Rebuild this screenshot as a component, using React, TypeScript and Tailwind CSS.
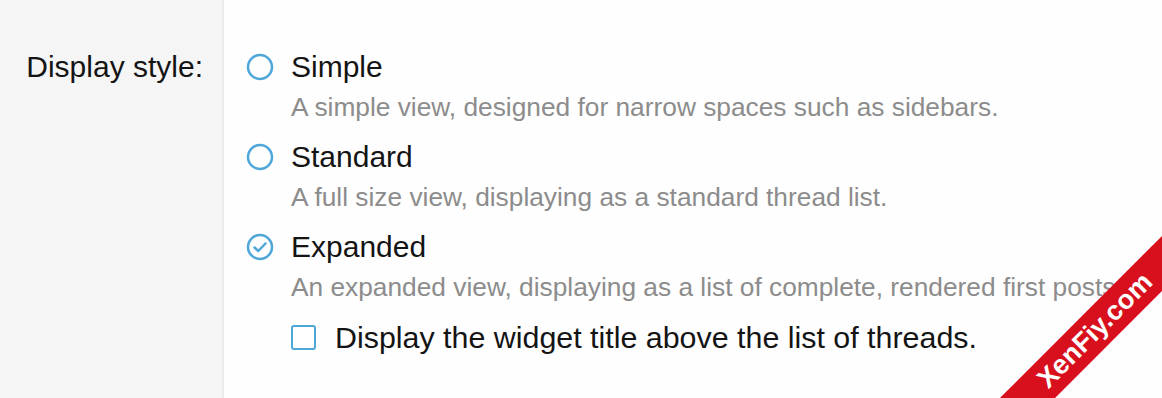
import React from 'react';

const OPTIONS = [
  { id: 'simple', label: 'Simple', hint: 'A simple view, designed for narrow spaces such as sidebars.' },
  { id: 'full', label: 'Standard', hint: 'A full size view, displaying as a standard thread list.' },
  { id: 'expanded', label: 'Expanded', hint: 'An expanded view, displaying as a list of complete, rendered first posts.' },
];

function Radio({ checked }: { checked: boolean }) {
  return (
    <svg width="28" height="28" viewBox="0 0 28 28" className="shrink-0">
      <circle cx="14" cy="14" r="12" fill="none" stroke="#4fa6d8" strokeWidth="2.5" />
      {checked && (
        <path d="M8.5 14.5 L12.3 18 L19.5 10.5" fill="none" stroke="#4fa6d8" strokeWidth="2.5" strokeLinecap="round" strokeLinejoin="round" />
      )}
    </svg>
  );
}

export default function App() {
  const selected = 'expanded';

  return (
    <div
      className="relative flex w-[1162px] h-[398px] overflow-hidden bg-[#fefefe] text-[#141414]"
      style={{ fontFamily: '"Liberation Sans", Arial, sans-serif' }}
    >
      {/* label column */}
      <div className="w-[224px] shrink-0 bg-[#f5f5f5] border-r-2 border-[#ebebeb] pt-[47px] pr-[19px] text-right">
        <div className="text-[30px] leading-[40px]">Display style:</div>
      </div>

      {/* options */}
      <div className="flex-1 pt-[47px] pl-[22px]">
        {OPTIONS.map(o => (
          <div key={o.id} className="mb-[10px]">
            <label className="flex items-center gap-[17px] h-[40px]">
              <Radio checked={selected === o.id} />
              <span className="text-[30px] leading-[40px] whitespace-nowrap">{o.label}</span>
            </label>
            <div className="pl-[45px] text-[26.3px] leading-[40px] text-[#8c8c8c] whitespace-nowrap">{o.hint}</div>
          </div>
        ))}
        <label className="flex items-center gap-[19px] h-[40px] pl-[45px]">
          <span className="w-[25px] h-[25px] shrink-0 rounded-[3px] border-[2.5px] border-[#4fa6d8] bg-white" />
          <span className="text-[30.4px] leading-[40px] whitespace-nowrap">Display the widget title above the list of threads.</span>
        </label>
      </div>

      {/* watermark */}
      <div className="absolute left-[895px] top-[311px] w-[400px] h-[39px] -rotate-45 bg-[#d8101d] flex items-center justify-center">
        <span className="text-white font-bold text-[27px] leading-none">XenFiy.com</span>
      </div>
    </div>
  );
}
